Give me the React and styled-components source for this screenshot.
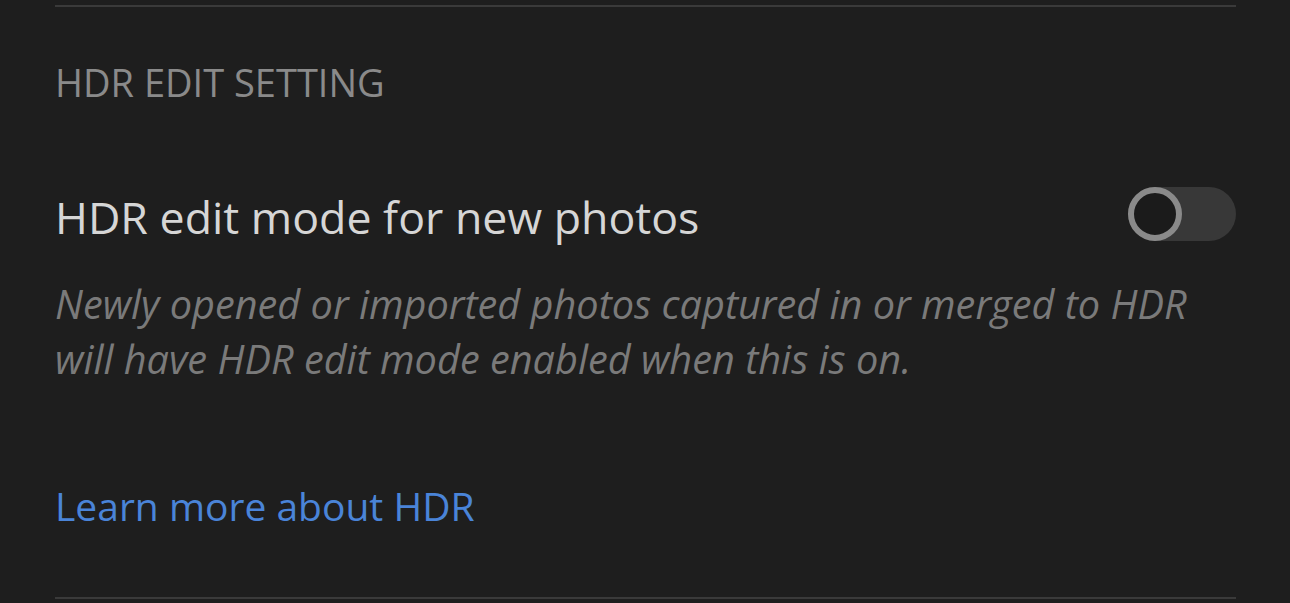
import React from 'react';
import styled, { createGlobalStyle } from 'styled-components';

const GlobalStyle = createGlobalStyle`
    html, body {
        margin: 0;
        background: #1e1e1e;
        font-family: "Open Sans", Lato, sans-serif;
    }
`;

const Page = styled.div`
    width: 1290px;
    height: 603px;
    box-sizing: border-box;
    padding: 5px 54px 0 55px;
    background: #1e1e1e;
    overflow: hidden;
`;

const Divider = styled.div`
    height: 2px;
    background: #3a3a3a;
    margin-top: ${props => props.top || 0}px;
`;

const SectionHeader = styled.h3`
    margin: 0;
    padding-top: 49px;
    font-size: 38px;
    font-weight: 400;
    line-height: 52px;
    color: #8a8a8a;
`;

const ToggleRow = styled.div`
    display: flex;
    align-items: flex-start;
    justify-content: space-between;
    margin-top: 79px;
`;

const Title = styled.span`
    padding-top: 3px;
    font-size: 44.7px;
    line-height: 54px;
    color: #d6d6d6;
`;

const Track = styled.div`
    position: relative;
    width: 108px;
    height: 54px;
    border-radius: 27px;
    background: #383838;
`;

const Knob = styled.div`
    position: absolute;
    left: 0;
    top: 0;
    width: 42px;
    height: 42px;
    border-radius: 50%;
    border: 6px solid #8a8a8a;
    background: #1b1b1b;
`;

const Description = styled.p`
    margin: 33px 0 0;
    font-size: 39.7px;
    line-height: 55px;
    font-style: italic;
    color: #7a7a7a;
`;

const LearnLink = styled.a`
    display: block;
    margin-top: 93px;
    font-size: 39px;
    line-height: 52px;
    color: #4a84d8;
    text-decoration: none;
`;

export default function App() {
    return (
        <>
            <GlobalStyle />
            <Page>
                <Divider />
                <SectionHeader>HDR EDIT SETTING</SectionHeader>
                <ToggleRow>
                    <Title>HDR edit mode for new photos</Title>
                    <Track>
                        <Knob />
                    </Track>
                </ToggleRow>
                <Description>
                    Newly opened or imported photos captured in or merged to HDR<br />
                    will have HDR edit mode enabled when this is on.
                </Description>
                <LearnLink href="#">Learn more about HDR</LearnLink>
                <Divider top={65} />
            </Page>
        </>
    );
}
